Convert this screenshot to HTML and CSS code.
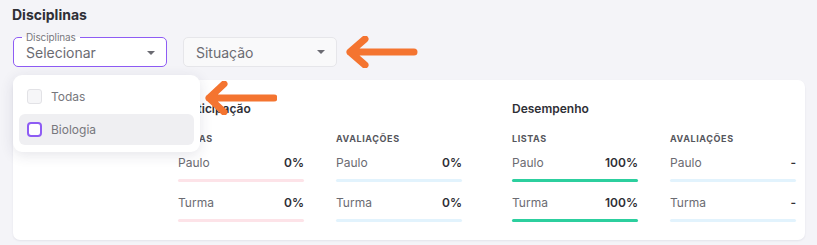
FILE: index.html
```html
<!DOCTYPE html>
<html lang="pt-BR">
<head>
    <meta charset="UTF-8">
    <meta name="viewport" content="width=device-width, initial-scale=1.0">
    <title>Disciplinas</title>
    <link rel="stylesheet" href="styles.css">
</head>
<body>
    <div class="page">
        <h2 class="page-title">Disciplinas</h2>

        <div class="filters">
            <div class="select select-active">
                <span class="select-label">Disciplinas</span>
                <span class="select-value">Selecionar</span>
                <span class="caret"></span>
            </div>
            <div class="select select-muted">
                <span class="select-value">Situação</span>
                <span class="caret"></span>
            </div>
        </div>

        <div class="card">
            <div class="group">
                <h3 class="group-title">Participação</h3>
                <div class="group-cols">
                    <div class="col">
                        <div class="col-title">Listas</div>
                        <div class="row"><span>Paulo</span><b>0%</b></div>
                        <div class="bar bar-pink"></div>
                        <div class="row"><span>Turma</span><b>0%</b></div>
                        <div class="bar bar-pink"></div>
                    </div>
                    <div class="col">
                        <div class="col-title">Avaliações</div>
                        <div class="row"><span>Paulo</span><b>0%</b></div>
                        <div class="bar bar-blue"></div>
                        <div class="row"><span>Turma</span><b>0%</b></div>
                        <div class="bar bar-blue"></div>
                    </div>
                </div>
            </div>
            <div class="group">
                <h3 class="group-title">Desempenho</h3>
                <div class="group-cols">
                    <div class="col">
                        <div class="col-title">Listas</div>
                        <div class="row"><span>Paulo</span><b>100%</b></div>
                        <div class="bar bar-blue"><div class="bar-fill" style="width: 100%"></div></div>
                        <div class="row"><span>Turma</span><b>100%</b></div>
                        <div class="bar bar-blue"><div class="bar-fill" style="width: 100%"></div></div>
                    </div>
                    <div class="col">
                        <div class="col-title">Avaliações</div>
                        <div class="row"><span>Paulo</span><b>-</b></div>
                        <div class="bar bar-blue"></div>
                        <div class="row"><span>Turma</span><b>-</b></div>
                        <div class="bar bar-blue"></div>
                    </div>
                </div>
            </div>
        </div>

        <!-- open dropdown of the first select -->
        <div class="menu">
            <div class="menu-item">
                <span class="check"></span>
                <span>Todas</span>
            </div>
            <div class="menu-item menu-item-hover">
                <span class="check check-purple"></span>
                <span>Biologia</span>
            </div>
        </div>

        <!-- annotation arrows -->
        <svg class="arrow arrow-select" width="72" height="32" viewBox="0 0 72 32">
            <path d="M4 16 H68 M19 3 L4 16 L19 29" fill="none" stroke="#f47430" stroke-width="7" stroke-linecap="round" stroke-linejoin="round"/>
        </svg>
        <svg class="arrow arrow-menu" width="72" height="34" viewBox="0 0 72 34">
            <path d="M4 17 H69 M19 3 L4 17 L19 31" fill="none" stroke="#f47430" stroke-width="7" stroke-linecap="round" stroke-linejoin="round"/>
        </svg>
    </div>
</body>
</html>
```

FILE: styles.css
```css
* {
    box-sizing: border-box;
}
body {
    margin: 0;
    background-color: #f4f4f8;
    font-family: Inter, "Noto Sans", sans-serif;
    color: #333;
}
.page {
    position: relative;
    padding: 5px 13px 0 13px;
    height: 245px;
}
.page-title {
    margin: 0 0 12px -1px;
    font-size: 14px;
    line-height: 20px;
    font-weight: 700;
    color: #2f2f36;
}
.filters {
    display: flex;
    gap: 16px;
}
.select {
    position: relative;
    width: 154px;
    height: 30px;
    display: flex;
    align-items: center;
    padding: 0 11px 0 12px;
    border-radius: 5px;
    font-size: 14px;
    color: #6b6b72;
}
.select-active {
    background-color: #fff;
    border: 1.5px solid #8e5cf4;
    padding-top: 1px;
}
.select-muted {
    background-color: #f9f9fa;
    border: 1px solid #e6e6ea;
}
.select-label {
    position: absolute;
    left: 8px;
    top: -7px;
    padding: 0 4px;
    font-size: 10px;
    line-height: 12px;
    letter-spacing: -0.1px;
    color: #77777d;
    background: linear-gradient(#f4f4f8 50%, #fff 50%);
}
.select-value {
    flex: 1;
}
.caret {
    width: 0;
    height: 0;
    border-left: 4px solid transparent;
    border-right: 4px solid transparent;
    border-top: 4px solid #6b6b72;
}
.card {
    display: flex;
    gap: 50px;
    margin-top: 13px;
    height: 160px;
    margin-right: -1px;
    padding: 20px 0 0 165px;
    background-color: #fff;
    border-radius: 7px;
    box-shadow: 0 1px 2px rgba(40, 40, 80, 0.08);
}
.group-title {
    margin: 0 0 15px 0;
    font-size: 12px;
    line-height: 18px;
    font-weight: 600;
    color: #2f2f36;
}
.group-cols {
    display: flex;
    gap: 32px;
}
.col {
    width: 126px;
}
.col-title {
    font-size: 9px;
    line-height: 12px;
    font-weight: 700;
    letter-spacing: 0.6px;
    text-transform: uppercase;
    color: #55555c;
    margin-bottom: 10px;
}
.row {
    display: flex;
    justify-content: space-between;
    font-size: 12px;
    line-height: 16px;
    color: #6b6b72;
}
.row b {
    font-weight: 600;
    color: #2f2f36;
}
.bar {
    height: 3px;
    border-radius: 2px;
    margin: 8px 0 13px 0;
}
.bar-pink {
    background-color: #fde3e8;
}
.bar-blue {
    background-color: #e2f3fd;
}
.bar-fill {
    height: 100%;
    border-radius: 2px;
    background-color: #2ccf9e;
}
.menu {
    position: absolute;
    left: 13px;
    top: 75px;
    width: 187px;
    padding: 6px 6px 7px 6px;
    background-color: #fff;
    border-radius: 9px;
    box-shadow: 0 3px 14px rgba(40, 40, 80, 0.12);
}
.menu-item {
    display: flex;
    align-items: center;
    gap: 9px;
    height: 31px;
    padding: 0 8px;
    border-radius: 6px;
    font-size: 12px;
    color: #77777d;
}
.menu-item + .menu-item {
    margin-top: 2px;
}
.menu-item-hover {
    background-color: #efeff2;
}
.check {
    width: 15px;
    height: 15px;
    border-radius: 3px;
    border: 1px solid #e2e2e6;
    background-color: #f6f6f8;
}
.check-purple {
    border: 2px solid #8e5cf4;
    border-radius: 4px;
    background-color: #fff;
}
.arrow {
    position: absolute;
}
.arrow-select {
    left: 346px;
    top: 36px;
}
.arrow-menu {
    left: 205px;
    top: 81px;
}
```
